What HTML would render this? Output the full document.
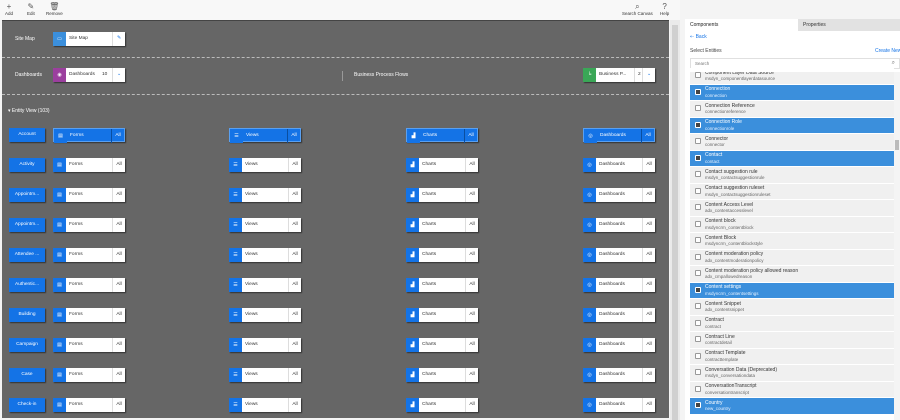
<!DOCTYPE html>
<html><head><meta charset="utf-8">
<style>
*{box-sizing:border-box;margin:0;padding:0}
body{width:900px;height:420px;overflow:hidden;background:#f4f4f4;font-family:"Liberation Sans",sans-serif;position:relative;font-size:5px;color:#333}
.abs{position:absolute}
.tb{left:0;top:0;width:680px;height:20px;background:#f8f8f8}
.tbi{position:absolute;top:2px;text-align:center;font-size:4.5px;color:#333}
.tbi .ic{font-size:8px;line-height:9px;color:#555}
.canvas{left:2px;top:20px;width:667px;height:398px;background:#666;border-top:1px solid #444}
.dash{position:absolute;left:0;width:667px;border-top:1px dashed #bbb}
.lbl{position:absolute;color:#fff;font-size:5px;white-space:nowrap}
.w{position:absolute;height:14px;width:72px;background:#fff;box-shadow:1px 1px 1px #333;font-size:4.8px;color:#333;white-space:nowrap}
.w .i{position:absolute;left:0;top:0;width:13px;height:14px;background:#1473e6;color:#fff;text-align:center;line-height:14px;font-size:5px}
.w .t{position:absolute;left:16px;top:0;line-height:14px}
.w .a{position:absolute;right:0;top:0;width:13px;height:14px;line-height:14px;text-align:center;border-left:1px solid #ddd}
.w.sel{background:#1473e6;color:#fff;border:1px solid #5aa0f0}
.w.sel .a{border-left:1px solid #0a4ea0}
.ent{position:absolute;left:9px;width:36px;height:14px;background:#1473e6;color:#fff;text-align:center;line-height:14px;font-size:4.8px;box-shadow:1px 1px 1px #333;white-space:nowrap}
.sb{left:670px;top:20px;width:10px;height:400px;background:#eaeaea}
.panel{left:685px;top:19px;width:215px;height:401px;background:#fff}
.item{position:absolute;left:690px;width:204px;height:15.5px;background:#f0f0f0;white-space:nowrap}
.item.s{background:#3b8fdc;color:#fff}
.item .cb{position:absolute;left:5px;top:4px;width:6px;height:6px;border:1px solid #999;background:#fff;border-radius:1px}
.item.s .cb{background:#444;border-color:#fff}
.item .n{position:absolute;left:15px;top:1.5px;font-size:5px;line-height:6px}
.item .d{position:absolute;left:15px;top:8px;font-size:4.5px;line-height:6px;color:#666}
.item.s .d{color:#e8f2ff}
</style></head><body>
<div class="abs tb"></div>
<div class="tbi" style="left:5px"><div class="ic">+</div>Add</div>
<div class="tbi" style="left:27px"><div class="ic">✎</div>Edit</div>
<div class="tbi" style="left:46px"><div class="ic">🗑</div>Remove</div>
<div class="tbi" style="left:622px"><div class="ic">⌕</div>Search Canvas</div>
<div class="tbi" style="left:660px"><div class="ic">?</div>Help</div>

<div class="abs canvas">
 <div class="lbl" style="left:13px;top:15px">Site Map</div>
 <div class="w" style="left:51px;top:11px"><div class="i" style="background:#3b8fdc">▭</div><div class="t">Site Map</div><div class="a" style="color:#1473e6">✎</div></div>
 <div class="dash" style="top:36px"></div>
 <div class="lbl" style="left:13px;top:51px">Dashboards</div>
 <div class="w" style="left:51px;top:47px"><div class="i" style="background:#9b3f9e">◉</div><div class="t">Dashboards</div><div style="position:absolute;left:49px;top:0;line-height:14px">10</div><div class="a" style="color:#1473e6">⌄</div></div>
 <div class="abs" style="left:340px;top:50px;width:1px;height:10px;background:#999"></div>
 <div class="lbl" style="left:352px;top:51px">Business Process Flows</div>
 <div class="w" style="left:581px;top:47px"><div class="i" style="background:#3aa757">╘</div><div class="t">Business P...</div><div style="position:absolute;left:51px;top:0;line-height:14px;border-left:1px solid #ddd;padding-left:3px">2</div><div class="a" style="color:#1473e6">⌄</div></div>
 <div class="dash" style="top:73px"></div>
 <div class="lbl" style="left:6px;top:87px">▾ Entity View (103)</div>
</div>
<div id="rows"></div>
<div class="abs sb"><div class="abs" style="left:2px;top:5px;width:6px;height:395px;background:#d0d0d0"></div></div>

<div class="abs panel"></div>
<div class="abs" style="left:685px;top:19px;width:113px;height:12px;background:#fff;font-size:5px;line-height:12px;padding-left:5px;color:#222">Components</div>
<div class="abs" style="left:798px;top:19px;width:102px;height:12px;background:#e2e2e2;font-size:5px;line-height:12px;padding-left:5px">Properties</div>
<div class="abs" style="left:690px;top:34px;font-size:5px;color:#1473e6">⇠ Back</div>
<div class="abs" style="left:690px;top:48px;font-size:5px;color:#444">Select Entities</div>
<div class="abs" style="left:875px;top:48px;font-size:5px;color:#1473e6;white-space:nowrap">Create New</div>
<div class="abs" style="left:690px;top:58px;width:210px;height:11px;border:1px solid #e0e0e0;background:#fff;font-size:4.5px;line-height:9px;padding-left:4px;color:#777">Search<span style="position:absolute;right:4px;font-size:6px">⌕</span></div>
<div class="abs" style="left:894px;top:72px;width:6px;height:348px;background:#f4f4f4"><div class="abs" style="left:1px;top:68px;width:4px;height:10px;background:#bbb"></div></div>
<div id="list"></div>
<script>
var ents=["Account","Activity","Appointm...","Appointm...","Attendee ...","Authentic...","Building","Campaign","Case","Check-in"];
var h="";
ents.forEach(function(e,i){var y=128+i*30;var s=i==0?" sel":"";
h+='<div class="ent" style="top:'+y+'px">'+e+'</div>';
[[53,"Forms","▤"],[229,"Views","☰"],[406,"Charts","▟"],[583,"Dashboards","◎"]].forEach(function(c){
h+='<div class="w'+s+'" style="left:'+c[0]+'px;top:'+y+'px"><div class="i">'+c[2]+'</div><div class="t">'+c[1]+'</div><div class="a">All</div></div>';});});
document.getElementById("rows").innerHTML=h;
var L=[["Component Layer Data Source","msdyn_componentlayerdatasource",0],["Connection","connection",1],["Connection Reference","connectionreference",0],["Connection Role","connectionrole",1],["Connector","connector",0],["Contact","contact",1],["Contact suggestion rule","msdyn_contactsuggestionrule",0],["Contact suggestion ruleset","msdyn_contactsuggestionruleset",0],["Content Access Level","adx_contentaccesslevel",0],["Content block","msdyncrm_contentblock",0],["Content Block","msdyncrm_contentblockstyle",0],["Content moderation policy","adx_contentmoderationpolicy",0],["Content moderation policy allowed reason","adx_cmpallowedreason",0],["Content settings","msdyncrm_contentsettings",1],["Content Snippet","adx_contentsnippet",0],["Contract","contract",0],["Contract Line","contractdetail",0],["Contract Template","contracttemplate",0],["Conversation Data (Deprecated)","msdyn_conversationdata",0],["ConversationTranscript","conversationtranscript",0],["Country","new_country",1]];
h="";L.forEach(function(l,i){var y=68+i*16.5;
h+='<div class="item'+(l[2]?" s":"")+'" style="top:'+y+'px"><div class="cb"></div><div class="n">'+l[0]+'</div><div class="d">'+l[1]+'</div></div>';});
h+='<div class="abs" style="left:690px;top:68px;width:204px;height:4px;background:#fff"></div>';
document.getElementById("list").innerHTML=h;
</script>
</body></html>
